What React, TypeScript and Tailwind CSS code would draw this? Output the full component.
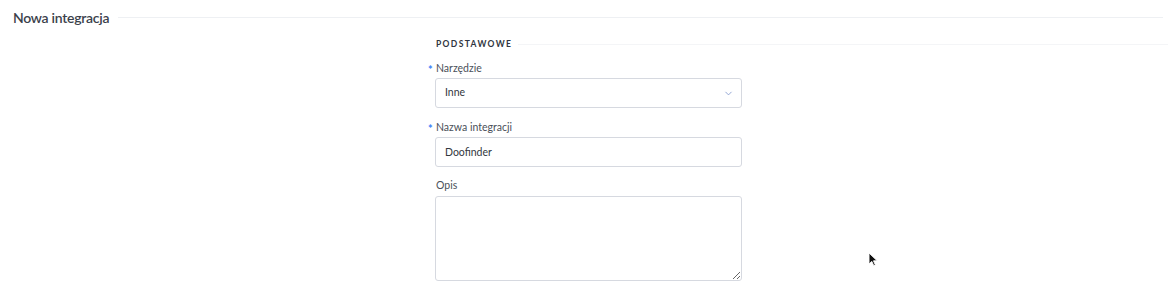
import { ChevronDown } from "lucide-react";

function Label({ text, required }: { text: string; required?: boolean }) {
  return (
    <div className="flex h-[14px] items-center">
      <span className="w-[8px] pt-[2px] text-[11px] font-bold leading-none text-[#3b82f6]">{required ? "*" : ""}</span>
      <span className="text-[10.5px] leading-none text-[#4a5059]">{text}</span>
    </div>
  );
}

export default function App() {
  return (
    <div className="relative h-[293px] w-[1168px] overflow-hidden bg-white font-['Lato','Liberation_Sans',sans-serif]">
      <header className="flex h-[35px] items-center gap-[9px] pl-[13px] pr-[5px]">
        <h1 className="text-[14px] font-semibold tracking-[-0.02em] text-[#3b414b]">Nowa integracja</h1>
        <div className="h-px flex-1 bg-[#eef0f3]" />
      </header>

      <section className="mt-[3px] pl-[428px]">
        <div className="flex h-[12px] items-center gap-[6px] pl-[8px]">
          <h2 className="text-[8.5px] font-bold uppercase tracking-[0.16em] text-[#2f3540]">Podstawowe</h2>
          <div className="h-px flex-1 bg-[#f4f5f7]" />
        </div>

        <div className="mt-[11px] flex w-[314px] flex-col">
          <Label text="Narzędzie" required />
          <div className="ml-[7px] mt-[3px] flex h-[30px] w-[307px] items-center justify-between rounded-[3px] border border-[#d6d9e0] pl-[9px] pr-[7px]">
            <span className="text-[10.5px] text-[#333840]">Inne</span>
            <ChevronDown size={11} strokeWidth={1.8} className="text-[#7f96cc]" />
          </div>

          <div className="mt-[12px]">
            <Label text="Nazwa integracji" required />
          </div>
          <input
            defaultValue="Doofinder"
            className="ml-[7px] mt-[3px] h-[30px] w-[307px] rounded-[3px] border border-[#d6d9e0] pl-[9px] text-[10.5px] text-[#333840] outline-none"
          />

          <div className="mt-[11px]">
            <Label text="Opis" />
          </div>
          <textarea className="ml-[7px] mt-[4px] h-[85px] w-[307px] resize-y rounded-[3px] border border-[#d6d9e0] p-[9px] text-[10.5px] outline-none" />
        </div>
      </section>

      <svg className="absolute left-[868px] top-[252px]" width="11" height="15" viewBox="0 0 11 15">
        <path d="M1 1 L1 12 L3.8 9.4 L5.8 13.8 L7.4 13.1 L5.5 8.8 L9.2 8.8 Z" fill="#111" stroke="#fff" strokeWidth="0.9" />
      </svg>
    </div>
  );
}
